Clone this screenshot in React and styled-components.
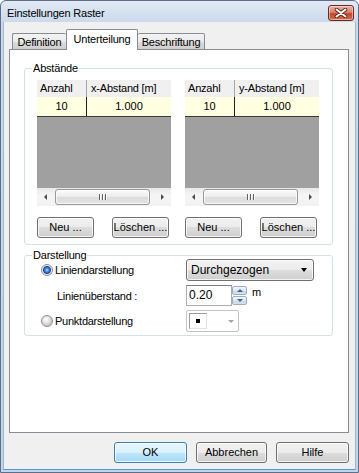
import React from "react";
import styled, { createGlobalStyle } from "styled-components";

const GlobalStyle = createGlobalStyle`
  html, body { margin: 0; padding: 0; background: #fff; }
  body {
    font-family: "Liberation Sans", Arial, sans-serif;
    font-size: 11px;
    color: #000;
  }
  * { box-sizing: border-box; }
`;

const Window = styled.div`
  width: 359px;
  height: 473px;
  display: flex;
  flex-direction: column;
  border: 1px solid #5d6e86;
  border-radius: 6px 6px 0 0;
  background: linear-gradient(#e1eaf5, #cad9ec 22px, #c4d5ea);
  padding: 0 2px 2px 2px;
`;

const TitleBar = styled.div`
  height: 21px;
  flex: none;
  display: flex;
  align-items: flex-start;
  justify-content: space-between;
  padding: 4px 2px 0 4px;
`;

const Title = styled.span`
  font-size: 11px;
  line-height: 16px;
  letter-spacing: -0.2px;
`;

const CloseBtn = styled.div`
  width: 26px;
  height: 16px;
  border: 1px solid #6b2a20;
  border-radius: 3px;
  background: linear-gradient(#eab2a5, #d9826f 45%, #c4452b 55%, #d4704f);
  box-shadow: inset 0 0 0 1px rgba(255, 255, 255, 0.45);
  display: flex;
  align-items: center;
  justify-content: center;
`;

const Client = styled.div`
  flex: 1;
  background: #f0f0f0;
  border: 1px solid #9fb6d2;
  border-top: none;
  border-bottom-color: #4a9ad8;
  padding: 7px 6px 0 5px;
  display: flex;
  flex-direction: column;
`;

const TabRow = styled.div`
  height: 21px;
  display: flex;
  align-items: flex-end;
  padding-left: 3px;
  position: relative;
  z-index: 1;
`;

const Tab = styled.div`
  width: ${(p) => p.$w}px;
  height: ${(p) => (p.$active ? 21 : 17)}px;
  display: flex;
  justify-content: center;
  padding-top: ${(p) => (p.$active ? 3 : 2)}px;
  line-height: 13px;
  letter-spacing: -0.2px;
  border: 1px solid #898c95;
  border-bottom: ${(p) => (p.$active ? "none" : "1px solid #898c95")};
  ${(p) => p.$noRight && "border-right: none;"}
  ${(p) => p.$noLeft && "border-left: none;"}
  border-radius: 2px 2px 0 0;
  background: ${(p) =>
    p.$active
      ? "#fff"
      : "linear-gradient(#f3f3f3, #ebebeb 50%, #dddddd 50%, #cfcfcf)"};
`;

const Panel = styled.div`
  position: relative;
  margin-top: -1px;
  width: 340px;
  height: 384px;
  background: #fff;
  border: 1px solid #898c95;
  padding: 18px 15px 0 14px;
`;

const Group = styled.div`
  position: relative;
  border: 1px solid #d5dfe5;
  border-radius: 3px;
  margin-top: ${(p) => p.$top || 0}px;
  padding: ${(p) => p.$pad};
`;

const Legend = styled.span`
  position: absolute;
  top: -7px;
  left: 7px;
  padding: 0 1px;
  background: #fff;
  line-height: 13px;
  letter-spacing: -0.2px;
`;

const Columns = styled.div`
  display: flex;
  gap: 14px;
`;

const Column = styled.div`
  width: 134px;
  display: flex;
  flex-direction: column;
`;

const Table = styled.div`
  height: 126px;
  display: flex;
  flex-direction: column;
  background: #a0a0a0;
`;

const HeadRow = styled.div`
  height: 17px;
  display: flex;
  background: #f0f0f0;
`;

const HeadCell = styled.div`
  width: ${(p) => (p.$first ? "50px" : "auto")};
  flex: ${(p) => (p.$first ? "none" : "1")};
  padding-left: ${(p) => (p.$first ? 3 : 4)}px;
  line-height: 17px;
  border-right: ${(p) => (p.$first ? "1px solid #a7a7a7" : "none")};
  letter-spacing: -0.2px;
`;

const DataRow = styled.div`
  height: 20px;
  display: flex;
  background: #ffffe1;
  border-bottom: 1px solid #3a3a3a;
`;

const DataCell = styled.div`
  width: ${(p) => (p.$first ? "50px" : "auto")};
  flex: ${(p) => (p.$first ? "none" : "1")};
  text-align: center;
  line-height: 19px;
  border-right: ${(p) => (p.$first ? "1px solid #1e1e1e" : "none")};
`;

const Fill = styled.div`
  flex: 1;
`;

const ScrollBar = styled.div`
  height: 18px;
  display: flex;
  align-items: center;
  background: linear-gradient(#e8e8e8, #f5f5f5 40%, #f2f2f2);
`;

const ArrowBtn = styled.div`
  width: 17px;
  height: 18px;
  display: flex;
  align-items: center;
  justify-content: center;
  &::before {
    content: "";
    border-top: 3.5px solid transparent;
    border-bottom: 3.5px solid transparent;
    ${(p) =>
      p.$dir === "left"
        ? "border-right: 3px solid #4a4a4a;"
        : "border-left: 3px solid #4a4a4a;"}
  }
`;

const Thumb = styled.div`
  width: 95px;
  height: 16px;
  margin-left: 1px;
  border: 1px solid #989898;
  border-radius: 3px;
  background: linear-gradient(#fbfbfb, #ececec 50%, #dcdcdc 51%, #e4e4e4);
  box-shadow: inset 0 0 0 1px rgba(255, 255, 255, 0.7);
  display: flex;
  align-items: center;
  justify-content: center;
  gap: 2px;
`;

const Grip = styled.div`
  width: 1px;
  height: 6px;
  background: #606060;
  box-shadow: 1px 0 0 #fff;
`;

const ButtonRow = styled.div`
  display: flex;
  justify-content: space-between;
  margin-top: 11px;
  padding-right: 2px;
`;

const Button = styled.div`
  width: ${(p) => p.$w}px;
  height: 21px;
  border: 1px solid ${(p) => (p.$primary ? "#3c7fb1" : "#707070")};
  border-radius: 3px;
  background: ${(p) =>
    p.$primary
      ? "linear-gradient(#eaf6fd, #d9f0fc 50%, #bee6fd 50%, #a7d9f5)"
      : "linear-gradient(#f2f2f2, #ebebeb 50%, #dddddd 50%, #cfcfcf)"};
  box-shadow: inset 0 0 0 1px rgba(255, 255, 255, 0.75);
  display: flex;
  align-items: center;
  justify-content: center;
  line-height: 13px;
  white-space: nowrap;
`;

const Footer = styled.div`
  width: 340px;
  margin-top: 9px;
  display: flex;
  justify-content: flex-end;
  gap: 9px;
`;

const FormGrid = styled.div`
  display: grid;
  grid-template-columns: 145px auto;
  grid-template-rows: 22px 21px 22px;
  row-gap: 4px;
  align-items: center;
`;

const RadioLabel = styled.div`
  display: flex;
  align-items: center;
  gap: 2px;
  letter-spacing: -0.25px;
`;

const Radio = styled.span`
  width: 12px;
  height: 12px;
  border-radius: 50%;
  border: 1px solid #8b8d8e;
  background: ${(p) =>
    p.$checked
      ? "radial-gradient(circle at 50% 50%, #a6dcfb 0, #3d86d6 2px, #1d4497 3.5px, #e9e9e9 4.5px, #f7f7f7 5px)"
      : "radial-gradient(circle at 40% 35%, #ffffff 0, #e8e8e8 3px, #c9c9c9 6px)"};
`;

const Label = styled.span`
  padding-left: ${(p) => p.$indent || 0}px;
  letter-spacing: -0.25px;
`;

const Select = styled.div`
  width: 128px;
  height: 22px;
  border: 1px solid #707070;
  border-radius: 3px;
  background: linear-gradient(#f2f2f2, #ebebeb 50%, #dddddd 50%, #cfcfcf);
  box-shadow: inset 0 0 0 1px rgba(255, 255, 255, 0.75);
  display: flex;
  align-items: center;
  justify-content: space-between;
  padding: 0 6px 0 4px;
  font-size: 12px;
  &::after {
    content: "";
    border-left: 3.5px solid transparent;
    border-right: 3.5px solid transparent;
    border-top: 4px solid #000;
  }
`;

const SpinField = styled.div`
  display: flex;
  align-items: flex-start;
`;

const TextBox = styled.div`
  width: 46px;
  height: 21px;
  border: 1px solid #abadb3;
  border-top-color: #7a7d86;
  background: #fff;
  padding-left: 2px;
  line-height: 19px;
  font-size: 12px;
`;

const Spinner = styled.div`
  width: 15px;
  height: 21px;
  display: flex;
  flex-direction: column;
  gap: 1px;
  padding: 1px 0;
`;

const SpinBtn = styled.div`
  flex: 1;
  border: 1px solid #9aaec6;
  border-radius: 2px;
  background: linear-gradient(#f4f8fc, #dde7f2 50%, #c8d6e8 51%, #d7e2ef);
  display: flex;
  align-items: center;
  justify-content: center;
  &::before {
    content: "";
    border-left: 3px solid transparent;
    border-right: 3px solid transparent;
    ${(p) =>
      p.$up
        ? "border-bottom: 3px solid #4d6185;"
        : "border-top: 3px solid #4d6185;"}
  }
`;

const Unit = styled.span`
  margin-left: 5px;
  margin-top: 1px;
  line-height: 12px;
`;

const SmallCombo = styled.div`
  width: 53px;
  height: 22px;
  border: 1px solid #c3c3c3;
  border-radius: 2px;
  background: #fff;
  display: flex;
  align-items: center;
  justify-content: space-between;
  padding: 0 4px 0 2px;
  &::after {
    content: "";
    border-left: 3px solid transparent;
    border-right: 3px solid transparent;
    border-top: 3px solid #a3a3a3;
  }
`;

const Swatch = styled.div`
  width: 18px;
  height: 16px;
  border: 1px solid #9c9c9c;
  border-right-color: #e3e3e3;
  border-bottom-color: #e3e3e3;
  display: flex;
  align-items: center;
  justify-content: center;
  &::before {
    content: "";
    width: 4px;
    height: 4px;
    background: #000;
  }
`;

function Grid({ axis }) {
  return (
    <Column>
      <Table>
        <HeadRow>
          <HeadCell $first>Anzahl</HeadCell>
          <HeadCell>{axis}-Abstand [m]</HeadCell>
        </HeadRow>
        <DataRow>
          <DataCell $first>10</DataCell>
          <DataCell>1.000</DataCell>
        </DataRow>
        <Fill />
        <ScrollBar>
          <ArrowBtn $dir="left" />
          <Thumb>
            <Grip />
            <Grip />
            <Grip />
          </Thumb>
          <Fill />
          <ArrowBtn $dir="right" />
        </ScrollBar>
      </Table>
      <ButtonRow>
        <Button $w={57}>Neu ...</Button>
        <Button $w={57}>Löschen ...</Button>
      </ButtonRow>
    </Column>
  );
}

export default function App() {
  return (
    <>
      <GlobalStyle />
      <Window>
        <TitleBar>
          <Title>Einstellungen Raster</Title>
          <CloseBtn>
            <svg width="14" height="10" viewBox="0 0 14 10">
              <path d="M2.5 1.5 L11.5 8.5 M11.5 1.5 L2.5 8.5" stroke="#5a1d14" strokeWidth="3.6" strokeLinecap="round" />
              <path d="M2.5 1.5 L11.5 8.5 M11.5 1.5 L2.5 8.5" stroke="#fff" strokeWidth="2" strokeLinecap="round" />
            </svg>
          </CloseBtn>
        </TitleBar>
        <Client>
          <TabRow>
            <Tab $w={54} $noRight>Definition</Tab>
            <Tab $w={72} $active>Unterteilung</Tab>
            <Tab $w={67} $noLeft>Beschriftung</Tab>
          </TabRow>
          <Panel>
            <Group $pad="11px 11px 6px 12px">
              <Legend>Abstände</Legend>
              <Columns>
                <Grid axis="x" />
                <Grid axis="y" />
              </Columns>
            </Group>
            <Group $top={10} $pad="3px 0 3px 16px">
              <Legend>Darstellung</Legend>
              <FormGrid>
                <RadioLabel>
                  <Radio $checked />
                  Liniendarstellung
                </RadioLabel>
                <Select>Durchgezogen</Select>
                <Label $indent={16}>Linienüberstand :</Label>
                <SpinField>
                  <TextBox>0.20</TextBox>
                  <Spinner>
                    <SpinBtn $up />
                    <SpinBtn />
                  </Spinner>
                  <Unit>m</Unit>
                </SpinField>
                <RadioLabel>
                  <Radio />
                  Punktdarstellung
                </RadioLabel>
                <SmallCombo>
                  <Swatch />
                </SmallCombo>
              </FormGrid>
            </Group>
          </Panel>
          <Footer>
            <Button $w={73} $primary>OK</Button>
            <Button $w={71}>Abbrechen</Button>
            <Button $w={73}>Hilfe</Button>
          </Footer>
        </Client>
      </Window>
    </>
  );
}
